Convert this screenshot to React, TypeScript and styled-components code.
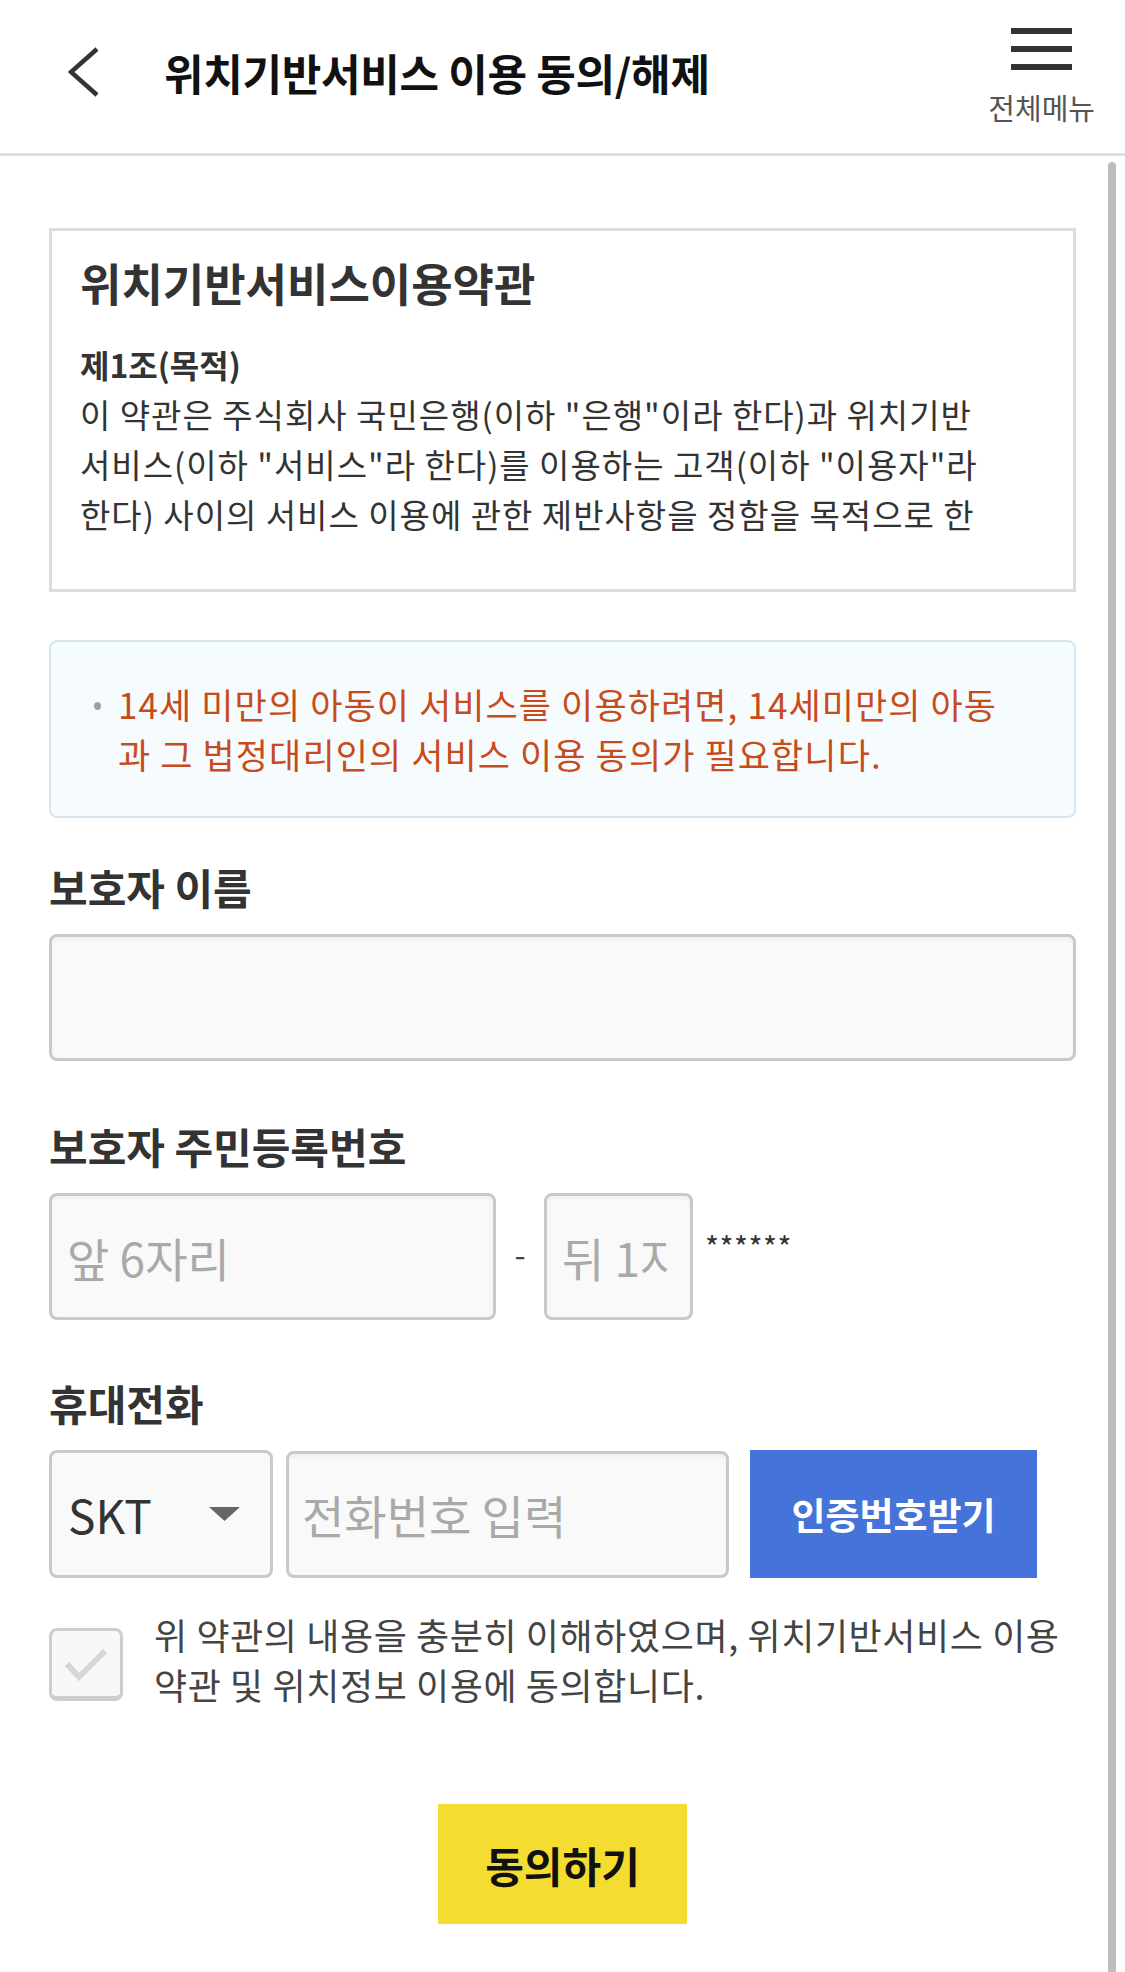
import styled, { createGlobalStyle } from "styled-components";

const GlobalStyle = createGlobalStyle`
  * {
    box-sizing: border-box;
  }

  body {
    margin: 0;
    background: #ffffff;
    font-family: "Noto Sans CJK KR", "Noto Sans", sans-serif;
    color: #333333;
  }
`;

const Page = styled.div`
  position: relative;
  width: 1125px;
  min-height: 1972px;
  overflow: hidden;
`;

const Header = styled.header`
  display: flex;
  justify-content: space-between;
  height: 156px;
  border-bottom: 3px solid #e0e0e0;
  padding: 0 30px 0 68px;
`;

const HeaderLeft = styled.div`
  display: flex;
  align-items: center;
  height: 143px;
`;

const BackButton = styled.button`
  display: flex;
  align-items: center;
  padding: 0;
  border: 0;
  background: none;
  cursor: pointer;
`;

const Title = styled.h1`
  margin: 0 0 0 64px;
  font-size: 43px;
  font-weight: 700;
  line-height: 60px;
  color: #111111;
  letter-spacing: -0.3px;
`;

const MenuButton = styled.button`
  display: flex;
  flex-direction: column;
  align-items: center;
  padding: 28px 0 0;
  border: 0;
  background: none;
  cursor: pointer;
  font-family: inherit;
`;

const MenuLabel = styled.span`
  margin-top: 21px;
  font-size: 29px;
  line-height: 32px;
  color: #555555;
`;

const Content = styled.main`
  display: flex;
  flex-direction: column;
  padding: 72px 49px 49px;
`;

const TermsBox = styled.section`
  border: 3px solid #dcdcdc;
  padding: 24px 28px 50px;
`;

const TermsTitle = styled.h2`
  margin: 0;
  font-size: 45px;
  line-height: 56px;
  font-weight: 700;
  color: #333333;
`;

const TermsScroll = styled.div`
  margin-top: 28px;
  height: 200px;
  overflow: hidden;
`;

const Article = styled.h3`
  margin: 0;
  font-size: 32px;
  line-height: 50px;
  font-weight: 700;
  color: #333333;
`;

const ArticleText = styled.p`
  margin: 0;
  font-size: 33px;
  line-height: 50px;
  letter-spacing: 1px;
  color: #333333;
  white-space: nowrap;
`;

const Notice = styled.div`
  display: flex;
  align-items: flex-start;
  margin-top: 48px;
  padding: 37px 10px 37px 43px;
  border: 2px solid #d6e6f0;
  border-radius: 8px;
  background: #f6fbfe;
`;

const Dot = styled.span`
  flex: none;
  width: 7px;
  height: 8px;
  margin-top: 23px;
  border-radius: 50%;
  background: #a0a0a0;
`;

const NoticeText = styled.p`
  margin: 0 0 0 17px;
  font-size: 35px;
  line-height: 50px;
  letter-spacing: 1.1px;
  color: #c84b1b;
  white-space: nowrap;
`;

const FieldLabel = styled.h4<{ top: number }>`
  margin: ${(p) => p.top}px 0 0;
  font-size: 42px;
  line-height: 50px;
  font-weight: 700;
  color: #333333;
`;

const Row = styled.div`
  display: flex;
  align-items: center;
  margin-top: 22px;
`;

const TextInput = styled.input<{ w?: number }>`
  width: ${(p) => (p.w ? `${p.w}px` : "100%")};
  height: 127px;
  padding: 0 20px 0 15px;
  border: 3px solid #c9c9c9;
  border-radius: 8px;
  background: #f9f9f9;
  box-shadow: inset 0 3px 4px rgba(0, 0, 0, 0.04);
  font-family: inherit;
  font-size: 46px;
  color: #333333;
  outline: none;

  &::placeholder {
    color: #a9a9a9;
  }
`;

const Dash = styled.span`
  width: 48px;
  text-align: center;
  font-size: 32px;
  color: #444444;
  line-height: 1;
  margin-top: -8px;
`;

const Masked = styled.span`
  margin-left: 12px;
  margin-top: -22px;
  font-size: 30px;
  letter-spacing: 0.5px;
  color: #333333;
`;

const Select = styled.div`
  display: flex;
  align-items: center;
  justify-content: space-between;
  width: 224px;
  height: 128px;
  padding: 0 30px 0 16px;
  border: 3px solid #c9c9c9;
  border-radius: 8px;
  background: #f9f9f9;
  font-size: 46px;
  color: #333333;
`;

const PhoneInput = styled(TextInput)`
  margin-left: 13px;
  padding-left: 13px;
`;

const SendButton = styled.button`
  width: 287px;
  height: 128px;
  margin-left: 21px;
  border: 0;
  background: #4673d9;
  color: #ffffff;
  font-family: inherit;
  font-size: 37px;
  font-weight: 700;
  cursor: pointer;
`;

const AgreeRow = styled.label`
  display: flex;
  align-items: flex-start;
  margin-top: 31px;
  cursor: pointer;
`;

const CheckBox = styled.span`
  flex: none;
  display: flex;
  width: 74px;
  height: 73px;
  margin-top: 19px;
  border: 3px solid #cdcdcd;
  border-bottom-width: 5px;
  border-radius: 8px;
  background: #f8f8f8;
`;

const AgreeText = styled.span`
  margin-left: 31px;
  font-size: 36px;
  line-height: 50px;
  letter-spacing: 0.6px;
  color: #444444;
  white-space: nowrap;
`;

const SubmitButton = styled.button`
  align-self: center;
  width: 249px;
  height: 120px;
  margin-top: 95px;
  border: 0;
  background: #f5dc31;
  color: #111111;
  font-family: inherit;
  font-size: 42px;
  font-weight: 700;
  cursor: pointer;
`;

const ScrollThumb = styled.div`
  position: absolute;
  top: 162px;
  right: 9px;
  width: 8px;
  height: 1900px;
  border-radius: 4px;
  background: #bdbdbd;
`;

export default function App() {
  return (
    <>
      <GlobalStyle />
      <Page>
        <Header>
          <HeaderLeft>
            <BackButton aria-label="뒤로">
              <svg width="32" height="50" viewBox="0 0 32 50">
                <polyline
                  points="29,2 3,25 29,48"
                  fill="none"
                  stroke="#333"
                  strokeWidth="4.5"
                />
              </svg>
            </BackButton>
            <Title>위치기반서비스 이용 동의/해제</Title>
          </HeaderLeft>
          <MenuButton>
            <svg width="61" height="42" viewBox="0 0 61 42">
              <rect x="0" y="0" width="61" height="6" fill="#333" />
              <rect x="0" y="18" width="61" height="6" fill="#333" />
              <rect x="0" y="36" width="61" height="6" fill="#333" />
            </svg>
            <MenuLabel>전체메뉴</MenuLabel>
          </MenuButton>
        </Header>

        <Content>
          <TermsBox>
            <TermsTitle>위치기반서비스이용약관</TermsTitle>
            <TermsScroll>
              <Article>제1조(목적)</Article>
              <ArticleText>
                이 약관은 주식회사 국민은행(이하 "은행"이라 한다)과 위치기반
                <br />
                서비스(이하 "서비스"라 한다)를 이용하는 고객(이하 "이용자"라
                <br />
                한다) 사이의 서비스 이용에 관한 제반사항을 정함을 목적으로 한
              </ArticleText>
            </TermsScroll>
          </TermsBox>

          <Notice>
            <Dot />
            <NoticeText>
              14세 미만의 아동이 서비스를 이용하려면, 14세미만의 아동
              <br />과 그 법정대리인의 서비스 이용 동의가 필요합니다.
            </NoticeText>
          </Notice>

          <FieldLabel top={44}>보호자 이름</FieldLabel>
          <Row>
            <TextInput />
          </Row>

          <FieldLabel top={60}>보호자 주민등록번호</FieldLabel>
          <Row>
            <TextInput w={447} placeholder="앞 6자리" />
            <Dash>-</Dash>
            <TextInput w={149} placeholder="뒤 1자리" />
            <Masked>******</Masked>
          </Row>

          <FieldLabel top={58}>휴대전화</FieldLabel>
          <Row>
            <Select>
              SKT
              <svg width="31" height="14" viewBox="0 0 31 14">
                <polygon points="0,0 31,0 15.5,14" fill="#666" />
              </svg>
            </Select>
            <PhoneInput w={443} placeholder="전화번호 입력" />
            <SendButton>인증번호받기</SendButton>
          </Row>

          <AgreeRow>
            <CheckBox>
              <svg width="68" height="65" viewBox="0 0 68 65">
                <polyline
                  points="15,33 27,46 53,20"
                  fill="none"
                  stroke="#d6d6d6"
                  strokeWidth="6"
                />
              </svg>
            </CheckBox>
            <AgreeText>
              위 약관의 내용을 충분히 이해하였으며, 위치기반서비스 이용
              <br />
              약관 및 위치정보 이용에 동의합니다.
            </AgreeText>
          </AgreeRow>

          <SubmitButton>동의하기</SubmitButton>
        </Content>
        <ScrollThumb />
      </Page>
    </>
  );
}
